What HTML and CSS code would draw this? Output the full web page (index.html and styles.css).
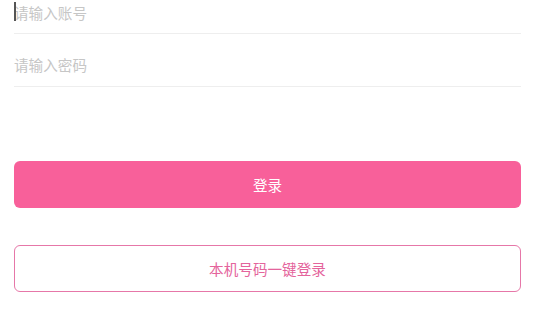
FILE: index.html
```html
<!DOCTYPE html>
<html lang="zh">
<head>
<meta charset="utf-8">
<link rel="stylesheet" href="styles.css">
</head>
<body>
<div class="page">
  <div class="field field-first">
    <span class="caret"></span>
    <span class="placeholder">请输入账号</span>
  </div>
  <div class="field">
    <span class="placeholder">请输入密码</span>
  </div>
  <div class="btn btn-primary">登录</div>
  <div class="btn btn-outline">本机号码一键登录</div>
</div>
</body>
</html>
```
FILE: styles.css
```css
html, body {
  margin: 0;
  padding: 0;
  background: #ffffff;
}
.page {
  padding: 0 16px 0 14px;
  font-family: "Noto Sans CJK SC", "Noto Sans", sans-serif;
  font-size: 14.6px;
}
.field {
  position: relative;
  padding: 20px 0 10px 0;
  line-height: 22px;
  height: 22px;
  border-bottom: 1px solid #eeeeee;
}
.field-first {
  padding-top: 2px;
  padding-bottom: 9px;
}
.placeholder {
  color: #c6c6c6;
}
.caret {
  position: absolute;
  left: 0;
  top: 2px;
  width: 2px;
  height: 19px;
  background: #555555;
}
.btn {
  box-sizing: border-box;
  height: 47px;
  border-radius: 6px;
  display: flex;
  align-items: center;
  justify-content: center;
}
.btn-primary {
  margin-top: 74px;
  background: #f8609a;
  color: #ffffff;
}
.btn-outline {
  margin-top: 37px;
  border: 1px solid #e677a8;
  color: #e4649c;
}
```
